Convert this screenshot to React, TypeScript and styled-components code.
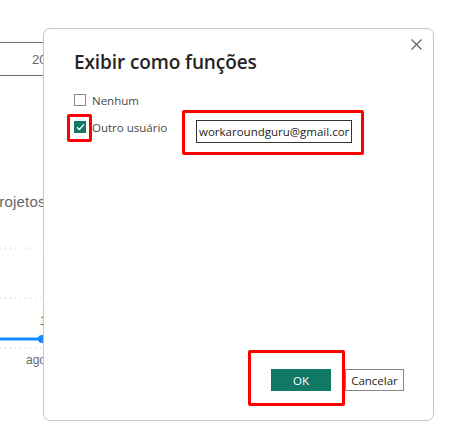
import React from "react";
import styled, { createGlobalStyle } from "styled-components";

const GlobalStyle = createGlobalStyle`
  html, body { margin: 0; padding: 0; background: #ffffff; }
  body { font-family: "Open Sans", "Noto Sans", "DejaVu Sans", sans-serif; }
  * { box-sizing: border-box; }
`;

const Page = styled.div`
  position: relative;
  width: 458px;
  height: 438px;
  overflow: hidden;
  background: #ffffff;
`;

const Report = styled.div`
  display: flex;
  flex-direction: column;
  width: 140px;
  padding-top: 42px;
`;

const Slicer = styled.div`
  display: flex;
  align-items: center;
  height: 34px;
  padding-left: 32px;
  border-top: 1px solid #6b6b6b;
  border-bottom: 1px solid #6b6b6b;
  font-size: 13px;
  color: #666666;
  font-family: "Liberation Sans", sans-serif;
`;

const ChartTitle = styled.div`
  margin-top: 117px;
  margin-left: -11px;
  font-size: 15px;
  color: #666666;
  letter-spacing: 0.2px;
  font-family: "Liberation Sans", sans-serif;
`;

const Chart = styled.svg`
  display: block;
  margin-top: 37px;
  overflow: visible;
`;

const Dialog = styled.div`
  position: absolute;
  left: 43px;
  top: 28px;
  width: 391px;
  height: 393px;
  background: #ffffff;
  border: 1px solid #c8c6c4;
  border-radius: 7px;
  padding: 18px 29px 29px 30px;
  display: flex;
  flex-direction: column;
`;

const CloseButton = styled.button`
  position: absolute;
  top: 8px;
  right: 10px;
  width: 14px;
  height: 14px;
  padding: 0;
  border: none;
  background: transparent;
  display: flex;
  align-items: center;
  justify-content: center;
`;

const Title = styled.h1`
  margin: 0;
  font-size: 19px;
  line-height: 30px;
  font-weight: 600;
  color: #252423;
  letter-spacing: -0.1px;
`;

const Options = styled.div`
  display: grid;
  grid-template-columns: 122px 156px;
  row-gap: 9px;
  margin-top: 14px;
  align-items: start;
`;

const OptionLabel = styled.label`
  display: flex;
  align-items: center;
  gap: 6px;
  font-size: 11.5px;
  color: #484644;
  height: 18px;
  white-space: nowrap;
`;

const Box = styled.span<{ $checked?: boolean }>`
  position: relative;
  display: inline-flex;
  align-items: center;
  justify-content: center;
  width: 12px;
  height: 12px;
  flex: none;
  border: 1px solid ${(p) => (p.$checked ? "#117865" : "#8a8886")};
  background: ${(p) => (p.$checked ? "#117865" : "#ffffff")};
`;

const Marked = styled.span<{ $shift?: number }>`
  position: relative;
  display: inline-flex;
  margin-top: ${(p) => p.$shift ?? 0}px;
`;

const Highlight = styled.span<{ $t: number; $r: number; $b: number; $l: number }>`
  position: absolute;
  top: ${(p) => p.$t}px;
  right: ${(p) => p.$r}px;
  bottom: ${(p) => p.$b}px;
  left: ${(p) => p.$l}px;
  border: 3px solid #ff0000;
  border-radius: 2px;
  pointer-events: none;
`;

const EmailInput = styled.input`
  width: 156px;
  height: 23px;
  padding: 0 2px;
  border: 1px solid #333333;
  border-radius: 0;
  font-family: "Open Sans", "Noto Sans", sans-serif;
  font-size: 11.5px;
  color: #252423;
  outline: none;
  background: #ffffff;
`;

const Footer = styled.div`
  margin-top: auto;
  display: flex;
  justify-content: flex-end;
  gap: 14px;
`;

const Button = styled.button<{ $primary?: boolean }>`
  height: 22px;
  width: ${(p) => (p.$primary ? 60 : 59)}px;
  padding: 0;
  font-family: "Open Sans", "Noto Sans", sans-serif;
  font-size: 11.5px;
  border-radius: 0;
  border: 1px solid ${(p) => (p.$primary ? "#117865" : "#8a8886")};
  background: ${(p) => (p.$primary ? "#117865" : "#ffffff")};
  color: ${(p) => (p.$primary ? "#ffffff" : "#252423")};
`;

export default function App() {
  return (
    <>
      <GlobalStyle />
      <Page>
        <Report>
          <Slicer>2024</Slicer>
          <ChartTitle>Projetos</ChartTitle>
          <Chart width="140" height="140" viewBox="0 0 140 140">
            <line x1="0" y1="1" x2="140" y2="1" stroke="#c8c8c8" strokeDasharray="1 4" />
            <line x1="0" y1="51" x2="140" y2="51" stroke="#c8c8c8" strokeDasharray="1 4" />
            <line x1="0" y1="101" x2="140" y2="101" stroke="#c8c8c8" strokeDasharray="1 4" />
            <text x="40" y="78" fontSize="12" fill="#555" fontFamily="Liberation Sans, sans-serif">1</text>
            <line x1="0" y1="92" x2="42" y2="92" stroke="#118dff" strokeWidth="3" />
            <circle cx="42" cy="92" r="4" fill="#118dff" />
            <text x="26" y="117" fontSize="12" fill="#666" fontFamily="Liberation Sans, sans-serif">ago</text>
          </Chart>
        </Report>

        <Dialog role="dialog" aria-label="Exibir como funções">
          <CloseButton aria-label="Fechar">
            <svg width="11" height="11" viewBox="0 0 11 11">
              <path d="M0.5 0.5 L10.5 10.5 M10.5 0.5 L0.5 10.5" stroke="#605e5c" strokeWidth="1.1" />
            </svg>
          </CloseButton>
          <Title>Exibir como funções</Title>
          <Options>
            <OptionLabel>
              <Box />
              Nenhum
            </OptionLabel>
            <span />
            <OptionLabel>
              <Marked>
                <Box $checked>
                  <svg width="9" height="8" viewBox="0 0 9 8">
                    <path d="M1 4.2 L3.4 6.4 L8 1.4" fill="none" stroke="#ffffff" strokeWidth="1.4" />
                  </svg>
                </Box>
                <Highlight $t={-7} $r={-6} $b={-9} $l={-7} />
              </Marked>
              Outro usuário
            </OptionLabel>
            <Marked $shift={2}>
              <EmailInput defaultValue="workaroundguru@gmail.com" />
              <Highlight $t={-10} $r={-12} $b={-12} $l={-14} />
            </Marked>
          </Options>
          <Footer>
            <Marked>
              <Button $primary>OK</Button>
              <Highlight $t={-19} $r={-14} $b={-15} $l={-23} />
            </Marked>
            <Button>Cancelar</Button>
          </Footer>
        </Dialog>
      </Page>
    </>
  );
}
